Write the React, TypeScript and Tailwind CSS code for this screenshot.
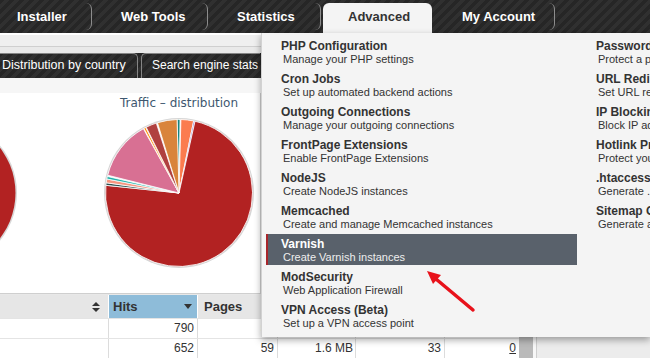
import React from "react";

type Item = { title: string; text: string; active?: boolean };

const leftItems: Item[] = [
  { title: "PHP Configuration", text: "Manage your PHP settings" },
  { title: "Cron Jobs", text: "Set up automated backend actions" },
  { title: "Outgoing Connections", text: "Manage your outgoing connections" },
  { title: "FrontPage Extensions", text: "Enable FrontPage Extensions" },
  { title: "NodeJS", text: "Create NodeJS instances" },
  { title: "Memcached", text: "Create and manage Memcached instances" },
  { title: "Varnish", text: "Create Varnish instances", active: true },
  { title: "ModSecurity", text: "Web Application Firewall" },
  { title: "VPN Access (Beta)", text: "Set up a VPN access point" }
];

const rightItems: Item[] = [
  { title: "Password Protection", text: "Protect a page or directory" },
  { title: "URL Redirects", text: "Set URL redirects" },
  { title: "IP Blocking", text: "Block IP addresses" },
  { title: "Hotlink Protection", text: "Protect your bandwidth" },
  { title: ".htaccess Editor", text: "Generate .htaccess rules" },
  { title: "Sitemap Generator", text: "Generate a sitemap" }
];

// pie slices, degrees clockwise from 12 o'clock
const slices = [
  { from: -1.5, to: 0.8, color: "#16857f" },
  { from: 1.5, to: 11.5, color: "#fb7c4f" },
  { from: 11.5, to: 12.6, color: "#6a5acd" },
  { from: 12.6, to: 276, color: "#b22222" },
  { from: 276, to: 278, color: "#2f4f4f" },
  { from: 278, to: 281, color: "#f6957f" },
  { from: 281, to: 283, color: "#20b2aa" },
  { from: 284, to: 331, color: "#d87093" },
  { from: 331.5, to: 333, color: "#ff8c00" },
  { from: 333.5, to: 342, color: "#b0403f" },
  { from: 343, to: 358.5, color: "#d9843b" }
];

const arc = (cx: number, cy: number, r: number, a0: number, a1: number): string => {
  const rad = (a: number) => ((a - 90) * Math.PI) / 180;
  const x0 = cx + r * Math.cos(rad(a0));
  const y0 = cy + r * Math.sin(rad(a0));
  const x1 = cx + r * Math.cos(rad(a1));
  const y1 = cy + r * Math.sin(rad(a1));
  const large = a1 - a0 > 180 ? 1 : 0;
  return `M${cx} ${cy} L${x0.toFixed(2)} ${y0.toFixed(2)} A${r} ${r} 0 ${large} 1 ${x1.toFixed(2)} ${y1.toFixed(2)} Z`;
};

const stripes =
  "bg-[repeating-linear-gradient(135deg,#262626_0px,#262626_3.5px,#303030_3.5px,#303030_7px)]";

const TopNav = () => (
  <div className={`flex h-[33px] ${stripes}`}>
    <div className="mt-[3px] h-[27px] w-[92px] shrink-0 rounded-r-[6px] border-r border-[#8c8c8c] pl-[17px] text-[13px] font-bold leading-[27px] text-white">
      Installer
    </div>
    <div className="mt-[3px] h-[27px] w-[116px] shrink-0 rounded-r-[6px] border-r border-[#8c8c8c] pl-[29px] text-[13px] font-bold leading-[27px] text-white">
      Web Tools
    </div>
    <div className="mt-[3px] h-[27px] w-[113px] shrink-0 rounded-r-[6px] border-r border-[#8c8c8c] pl-[29px] text-[13px] font-bold leading-[27px] text-white">
      Statistics
    </div>
    <div className="ml-[2px] mt-[3px] h-[30px] w-[109px] shrink-0 rounded-t-[6px] bg-[#f4f4f4] pl-[25px] text-[13px] font-bold leading-[28px] text-[#333]">
      Advanced
    </div>
    <div className="mt-[3px] h-[27px] w-[123px] shrink-0 rounded-r-[6px] border-r border-[#8c8c8c] pl-[30px] text-[13px] font-bold leading-[27px] text-white">
      My Account
    </div>
  </div>
);

const SubTabs = () => (
  <div className={`flex h-[25px] ${stripes}`}>
    <div className="h-[25px] w-[138px] shrink-0 rounded-tr-[5px] border-t border-r border-[#858585] pl-[2px] text-[12.5px] leading-[23px] text-white">
      Distribution by country
    </div>
    <div className="ml-[3px] h-[25px] w-[119px] shrink-0 whitespace-nowrap rounded-tl-[5px] border-t border-l border-[#858585] pl-[10px] text-[12px] leading-[23px] text-white">
      Search engine stats
    </div>
  </div>
);

const ChartPanel = () => (
  <div className="relative h-[200px] w-[260px] shrink-0 overflow-hidden bg-white">
    <svg width="260" height="200" className="absolute left-0 top-0">
      <circle cx={-58} cy={100} r={75} fill="#d8d8d8" />
      <circle cx={-58} cy={100} r={73.5} fill="#b22222" />
      <circle cx={179} cy={100} r={75} fill="#d6d6d6" />
      <circle cx={179} cy={100} r={73.5} fill="#ffffff" />
      {slices.map((s, i) => (
        <path key={i} d={arc(179, 100, 73.5, s.from, s.to)} fill={s.color} stroke="#ffffff" strokeWidth={0.8} />
      ))}
      <text
        x={179}
        y={14}
        textAnchor="middle"
        fill="#3e576f"
        fontSize={12}
        fontFamily="'DejaVu Sans', sans-serif"
      >
        Traffic – distribution
      </text>
    </svg>
  </div>
);

const SortIcon = () => (
  <svg width="8" height="10" viewBox="0 0 8 10">
    <path d="M0 4 L4 0 L8 4 Z M0 6 L8 6 L4 10 Z" fill="#333" />
  </svg>
);

// first row sits mostly under the open menu, only its left cells show
const rows = [
  ["790", "57", "", "", ""],
  ["652", "59", "1.6 MB", "33", "0"]
];

const StatsTable = () => (
  <div className="flex">
    <div className="w-[519px] shrink-0 text-[12px] text-[#333]">
      <div className="flex h-[23px] text-[13px] font-bold leading-[23px]">
        <div className="flex w-[109px] items-center justify-end border-r border-white bg-[#e6e6e6] pr-[8px]">
          <SortIcon />
        </div>
        <div className="flex w-[89px] items-center justify-between border-r border-white bg-[#8ebcd9] pl-[4px] pr-[5px]">
          <span>Hits</span>
          <svg width="8" height="5" viewBox="0 0 8 5">
            <path d="M0 0 L8 0 L4 5 Z" fill="#333" />
          </svg>
        </div>
        <div className="w-[60px] bg-[#e6e6e6] pl-[6px]">Pages</div>
        <div className="flex-1 bg-[#e6e6e6]" />
      </div>
      {rows.map((r, i) => (
        <div key={i} className="flex h-[20px] border-t border-[#e4e4e4] bg-white leading-[19px]">
          <div className="w-[109px] border-r border-[#dcdcdc]" />
          <div className="w-[89px] border-r border-[#dcdcdc] pr-[3px] text-right">{r[0]}</div>
          <div className="w-[80px] border-r border-[#dcdcdc] pr-[3px] text-right">{r[1]}</div>
          <div className="w-[78px] border-r border-[#dcdcdc] pr-[2px] text-right">{r[2]}</div>
          <div className="w-[89px] border-r border-[#dcdcdc] pr-[3px] text-right">{r[3]}</div>
          <div className="w-[74px] pr-[3px] text-right">
            <span className="underline">{r[4]}</span>
          </div>
        </div>
      ))}
    </div>
    <div className="mt-[23px] h-[40px] w-[14px] shrink-0 bg-[#bababa]" />
    <div className="w-[4px] shrink-0 border-r border-[#cfcfcf] bg-[#f7f7f7]" />
    <div className="flex-1 bg-[#ececec]" />
  </div>
);

const MenuItem = ({ item }: { item: Item }) => (
  <div
    className={
      item.active
        ? "mb-[2px] h-[31px] border-l-2 border-[#a8262b] bg-[#59616b] pl-[13px] pt-[3px] text-white"
        : "mb-[2px] h-[31px] pl-[15px] pt-[3px] text-[#333]"
    }
  >
    <div className="whitespace-nowrap text-[12px] font-bold leading-[14px]">{item.title}</div>
    <div className={`whitespace-nowrap pl-[2px] text-[11px] leading-[13px] ${item.active ? "text-[#eeeeee]" : "text-[#333]"}`}>
      {item.text}
    </div>
  </div>
);

const Dropdown = () => (
  <div className="absolute left-[261px] top-[33px] h-[304px] w-[389px] overflow-hidden border-l border-[#d2d2d2] bg-[#f4f4f4] shadow-[0_3px_7px_rgba(0,0,0,0.35)]">
    <div className="flex gap-[4px] pl-[4px] pt-[3px]">
      <div className="w-[311px] shrink-0">
        {leftItems.map((it) => (
          <MenuItem key={it.title} item={it} />
        ))}
      </div>
      <div className="w-[200px] shrink-0">
        {rightItems.map((it) => (
          <MenuItem key={it.title} item={it} />
        ))}
      </div>
    </div>
  </div>
);

const Arrow = () => (
  <svg className="absolute left-0 top-0" width="650" height="358">
    <line x1={473} y1={310} x2={436} y2={279} stroke="#e8121b" strokeWidth={3.5} strokeLinecap="round" />
    <polygon points="427,271 441,275 433,284" fill="#e8121b" />
  </svg>
);

export default function App() {
  return (
    <div className="relative h-[358px] w-[650px] overflow-hidden bg-[#ececec] font-['Liberation_Sans',Arial,sans-serif]">
      <TopNav />
      <div className="h-[14px] border-t-2 border-b border-t-white border-b-[#cfcfcf] bg-[#efefef]" />
      <div className="h-[6px] bg-[#e9e9e9]" />
      <SubTabs />
      <div className="h-[15px] bg-[#f6f6f6]" />
      <div className="flex h-[200px]">
        <ChartPanel />
        <div className="flex-1 border-l border-[#cfcfcf] bg-[#efefef]" />
      </div>
      <div className="h-[2px] border-t border-[#cfcfcf] bg-[#e8e8e8]" />
      <StatsTable />
      <Dropdown />
      <Arrow />
    </div>
  );
}
